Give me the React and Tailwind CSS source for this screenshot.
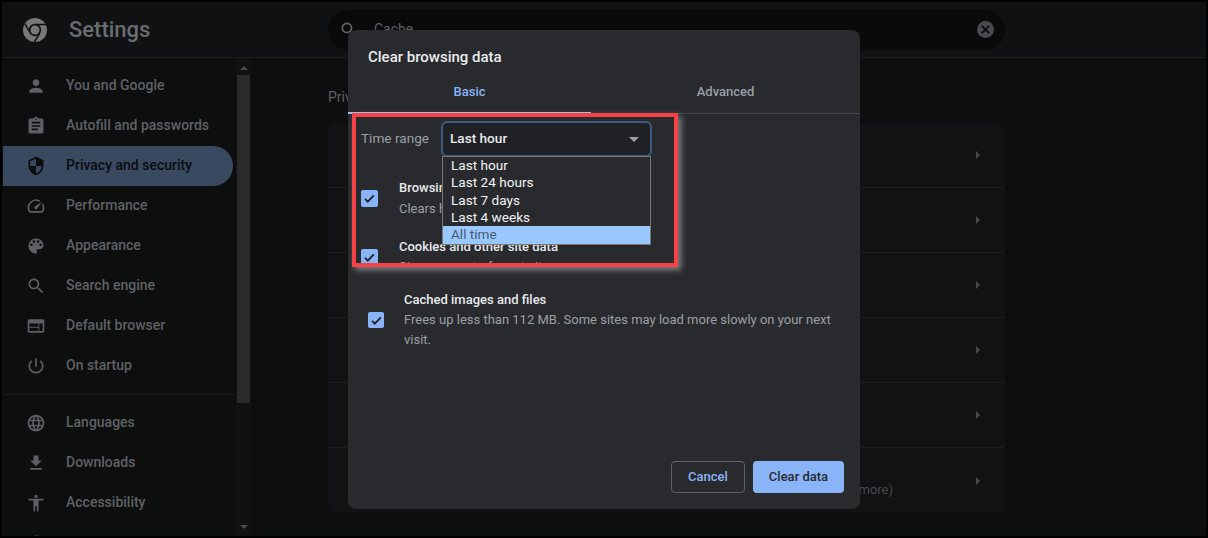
import { useState } from "react";

const FONT = "font-['Roboto','Liberation_Sans',sans-serif]";

const ICONS = {
  person:
    "M12 12c2.21 0 4-1.79 4-4s-1.79-4-4-4-4 1.79-4 4 1.79 4 4 4zm0 2c-2.67 0-8 1.34-8 4v2h16v-2c0-2.66-5.33-4-8-4z",
  assignment:
    "M19 3h-4.18C14.4 1.84 13.3 1 12 1c-1.3 0-2.4.84-2.82 2H5c-1.1 0-2 .9-2 2v14c0 1.1.9 2 2 2h14c1.1 0 2-.9 2-2V5c0-1.1-.9-2-2-2zm-7 0c.55 0 1 .45 1 1s-.45 1-1 1-1-.45-1-1 .45-1 1-1zm2 14H7v-2h7v2zm3-4H7v-2h10v2zm0-4H7V7h10v2z",
  shield:
    "M12 1L3 5v6c0 5.55 3.84 10.74 9 12 5.16-1.26 9-6.45 9-12V5l-9-4zm0 10.99h7c-.53 4.12-3.28 7.79-7 8.94V12H5V6.3l7-3.11v8.8z",
  speed:
    "M20.38 8.57l-1.23 1.85a8 8 0 0 1-.22 7.58H5.07A8 8 0 0 1 15.58 6.85l1.85-1.23A10 10 0 0 0 3.35 19a2 2 0 0 0 1.72 1h13.85a2 2 0 0 0 1.74-1 10 10 0 0 0-.27-10.44zm-9.79 6.84a2 2 0 0 0 2.83 0l5.66-8.49-8.49 5.66a2 2 0 0 0 0 2.83z",
  palette:
    "M12 3c-4.97 0-9 4.03-9 9s4.03 9 9 9c.83 0 1.5-.67 1.5-1.5 0-.39-.15-.74-.39-1.01-.23-.26-.38-.61-.38-.99 0-.83.67-1.5 1.5-1.5H16c2.76 0 5-2.24 5-5 0-4.42-4.03-8-9-8zm-5.5 9c-.83 0-1.5-.67-1.5-1.5S5.67 9 6.5 9 8 9.67 8 10.5 7.33 12 6.5 12zm3-4C8.67 8 8 7.33 8 6.5S8.67 5 9.5 5s1.5.67 1.5 1.5S10.33 8 9.5 8zm5 0c-.83 0-1.5-.67-1.5-1.5S13.67 5 14.5 5s1.5.67 1.5 1.5S15.33 8 14.5 8zm3 4c-.83 0-1.5-.67-1.5-1.5S16.67 9 17.5 9s1.5.67 1.5 1.5-.67 1.5-1.5 1.5z",
  search:
    "M15.5 14h-.79l-.28-.27C15.41 12.59 16 11.11 16 9.5 16 5.91 13.09 3 9.5 3S3 5.91 3 9.5 5.91 16 9.5 16c1.61 0 3.09-.59 4.23-1.57l.27.28v.79l5 4.99L20.49 19l-4.99-5zm-6 0C7.01 14 5 11.99 5 9.5S7.01 5 9.5 5 14 7.01 14 9.5 11.99 14 9.5 14z",
  web: "M20 4H4c-1.1 0-1.99.9-1.99 2L2 18c0 1.1.9 2 2 2h16c1.1 0 2-.9 2-2V6c0-1.1-.9-2-2-2zm-5 14H4v-4h11v4zm0-5H4V9h11v4zm5 5h-4V9h4v9z",
  power:
    "M13 3h-2v10h2V3zm4.83 2.17l-1.42 1.42C17.99 7.86 19 9.81 19 12c0 3.87-3.13 7-7 7s-7-3.13-7-7c0-2.19 1.01-4.14 2.58-5.42L6.17 5.17C4.23 6.82 3 9.26 3 12c0 4.97 4.03 9 9 9s9-4.03 9-9c0-2.74-1.23-5.18-3.17-6.83z",
  language:
    "M11.99 2C6.47 2 2 6.48 2 12s4.47 10 9.99 10C17.52 22 22 17.52 22 12S17.52 2 11.99 2zm6.93 6h-2.95c-.32-1.25-.78-2.45-1.38-3.56 1.84.63 3.37 1.91 4.33 3.56zM12 4.04c.83 1.2 1.48 2.53 1.91 3.96h-3.82c.43-1.43 1.08-2.76 1.91-3.96zM4.26 14C4.1 13.36 4 12.69 4 12s.1-1.36.26-2h3.38c-.08.66-.14 1.32-.14 2 0 .68.06 1.34.14 2H4.26zm.82 2h2.95c.32 1.25.78 2.45 1.38 3.56-1.84-.63-3.37-1.9-4.33-3.56zm2.95-8H5.08c.96-1.66 2.49-2.93 4.33-3.56C8.81 5.55 8.35 6.75 8.03 8zM12 19.96c-.83-1.2-1.48-2.53-1.91-3.96h3.82c-.43 1.43-1.08 2.76-1.91 3.96zM14.34 14H9.66c-.09-.66-.16-1.32-.16-2 0-.68.07-1.35.16-2h4.68c.09.65.16 1.32.16 2 0 .68-.07 1.34-.16 2zm.25 5.56c.6-1.11 1.06-2.31 1.38-3.56h2.95c-.96 1.65-2.49 2.93-4.33 3.56zM16.36 14c.08-.66.14-1.32.14-2 0-.68-.06-1.34-.14-2h3.38c.16.64.26 1.31.26 2s-.1 1.36-.26 2h-3.38z",
  download: "M19 9h-4V3H9v6H5l7 7 7-7zM5 18v2h14v-2H5z",
  accessibility:
    "M12 2c1.1 0 2 .9 2 2s-.9 2-2 2-2-.9-2-2 .9-2 2-2zm9 7h-6v13h-2v-6h-2v6H9V9H3V7h18v2z",
  history:
    "M13 3a9 9 0 0 0-9 9H1l3.89 3.89.07.14L9 12H6a7 7 0 1 1 2.05 4.95l-1.42 1.42A9 9 0 1 0 13 3z",
};

const NAV_TOP = [
  { icon: "person", label: "You and Google" },
  { icon: "assignment", label: "Autofill and passwords" },
  { icon: "shield", label: "Privacy and security", active: true },
  { icon: "speed", label: "Performance" },
  { icon: "palette", label: "Appearance" },
  { icon: "search", label: "Search engine" },
  { icon: "web", label: "Default browser" },
  { icon: "power", label: "On startup" },
];

const NAV_BOTTOM = [
  { icon: "language", label: "Languages" },
  { icon: "download", label: "Downloads" },
  { icon: "accessibility", label: "Accessibility" },
  { icon: "history", label: "System" },
];

const TIME_RANGES = ["Last hour", "Last 24 hours", "Last 7 days", "Last 4 weeks"];

function Icon({ name, className }) {
  return (
    <svg viewBox="0 0 24 24" className={className} fill="currentColor">
      <path d={ICONS[name]} />
    </svg>
  );
}

function NavItem({ item }) {
  return (
    <div
      className={`mr-[3px] flex h-10 shrink-0 items-center rounded-r-[20px] ${
        item.active ? "bg-[#394960] text-[#0b0c0e]" : "text-[#5c5f63]"
      }`}
    >
      <Icon name={item.icon} className="ml-[23px] h-5 w-5 shrink-0" />
      <span
        className={`-mt-[2px] ml-[20px] whitespace-nowrap text-[14px] font-medium ${
          item.active ? "text-[#0b0c0e]" : "text-[#5e6165]"
        }`}
      >
        {item.label}
      </span>
    </div>
  );
}

function Checkbox({ className }) {
  return (
    <span className={`flex items-center justify-center rounded-[2px] bg-[#8ab4f8] ${className}`}>
      <svg viewBox="0 0 16 16" className="h-[15px] w-[15px]" fill="none" stroke="#202124" strokeWidth="1.9">
        <path d="M3.2 8.4l3 3 6.4-6.8" />
      </svg>
    </span>
  );
}

function Row({ last, children }) {
  return (
    <div
      className={`relative flex h-[65px] items-center justify-end pr-[25px] ${
        last ? "" : "border-b border-[#1d1e20]"
      }`}
    >
      {children}
      <span className="h-0 w-0 border-y-[4.5px] border-l-[4px] border-y-transparent border-l-[#47494c]" />
    </div>
  );
}

function ChromeLogo() {
  return (
    <svg viewBox="0 0 24 24" className="ml-[21px] h-6 w-6 shrink-0">
      <circle cx="12" cy="12" r="12" fill="#76787a" />
      <circle cx="12" cy="12" r="6.2" fill="#101113" />
      <circle cx="12" cy="12" r="4.5" fill="#76787a" />
      <path d="M12 6.5H23M7.2 15l-5.4-9.4M16.8 15l-5.6 9.4" stroke="#101113" strokeWidth="1.5" />
    </svg>
  );
}

function App() {
  const [range] = useState("Last hour");

  return (
    <div className={`${FONT} relative flex h-[538px] w-[1208px] flex-col overflow-hidden border-2 border-black bg-[#0d0e0e]`}>
      {/* Header */}
      <header className="flex h-[56px] shrink-0 items-center border-b border-[#1d1e20] bg-[#101113]">
        <ChromeLogo />
        <span className="ml-[22px] w-[259px] text-[22px] font-medium text-[#6a6d70]">Settings</span>
        <div className="flex h-10 w-[677px] items-center rounded-full bg-[#0a0a0b] pl-[11px] pr-[11px]">
          <Icon name="search" className="h-5 w-5 text-[#5e6165]" />
          <span className="ml-[15px] flex-1 text-[14px] text-[#5e6165]">Cache</span>
          <span className="flex h-[17px] w-[17px] items-center justify-center rounded-full bg-[#47494c]">
            <svg viewBox="0 0 12 12" className="h-[11px] w-[11px]" stroke="#0c0c0d" strokeWidth="2">
              <path d="M2 2l8 8M10 2l-8 8" />
            </svg>
          </span>
        </div>
      </header>

      <div className="flex min-h-0 flex-1">
        {/* Sidebar */}
        <nav className="flex w-[234px] shrink-0 flex-col overflow-hidden pl-px pt-[8px]">
          {NAV_TOP.map((item) => (
            <NavItem key={item.label} item={item} />
          ))}
          <div className="mb-[8px] mt-[8px] h-px shrink-0 bg-[#1a1b1c]" />
          {NAV_BOTTOM.map((item) => (
            <NavItem key={item.label} item={item} />
          ))}
        </nav>

        {/* Scrollbar */}
        <div className="flex w-[15px] shrink-0 flex-col items-center bg-[#111111]">
          <span className="mt-[8px] h-0 w-0 border-x-[4px] border-b-[4px] border-x-transparent border-b-[#47494c]" />
          <div className="mt-[5px] h-[328px] w-[13px] bg-[#2a2a2a]" />
          <span className="mb-[7px] mt-auto h-0 w-0 border-x-[4px] border-t-[4px] border-x-transparent border-t-[#47494c]" />
        </div>

        {/* Main */}
        <main className="min-w-0 flex-1 pl-[77px] pt-[30px]">
          <p className="text-[14px] font-normal leading-[18px] text-[#5e6165]">Privacy and security</p>
          <div className="mt-[17px] w-[677px] rounded-lg bg-[#111214]">
            <Row />
            <Row />
            <Row />
            <Row />
            <Row />
            <Row last>
              <span className="absolute left-[511px] top-[32px] text-[13px] text-[#47494c]">(or more)</span>
            </Row>
          </div>
        </main>
      </div>

      {/* Clear browsing data dialog */}
      <div className="absolute left-[346px] top-[28px] flex h-[479px] w-[512px] flex-col rounded-lg bg-[#292a2d]">
        <h2 className="pl-5 pt-[17px] text-[15px] font-medium leading-5 text-[#e8eaed]">Clear browsing data</h2>
        <div className="mt-[15px] flex h-[32px] border-b border-[#45474a] text-[13px] font-medium">
          <div className="relative flex w-[243px] items-start justify-center leading-5 text-[#8ab4f8]">
            Basic
            <span className="absolute bottom-[-1px] left-0 right-0 h-[2px] bg-[#a8b8e8]" />
          </div>
          <div className="flex flex-1 items-start justify-center leading-5 text-[#9aa0a6]">Advanced</div>
        </div>

        {/* Cached images row, the rest sits under the highlight box */}
        <div className="mt-[176px] flex pl-5 pr-[24px]">
          <Checkbox className="mt-[22px] h-4 w-4 shrink-0" />
          <div className="ml-5 text-[13px] leading-5">
            <p className="font-medium text-[#e8eaed]">Cached images and files</p>
            <p className="text-[#9aa0a6]">
              Frees up less than 112 MB. Some sites may load more slowly on your next visit.
            </p>
          </div>
        </div>

        <div className="mt-auto flex justify-end gap-2 pb-4 pr-4 text-[13px] font-medium">
          <button className="h-8 w-[74px] rounded border border-[#5f6368] text-[#8ab4f8]">Cancel</button>
          <button className="h-8 w-[91px] rounded bg-[#8ab4f8] text-[#292a2d]">Clear data</button>
        </div>
      </div>

      {/* Red highlight box pasted over the dialog */}
      <div className="absolute left-[350px] top-[111px] h-[154px] w-[326px] overflow-hidden border-4 border-[#f44246] bg-[#292a2d]">
        <div className="flex items-center pl-[5px] pt-[4px]">
          <span className="-mt-[2px] w-[80px] text-[13.6px] text-[#9aa0a6]">Time range</span>
          <div className="flex h-[36px] w-[211px] items-center justify-between rounded-md border-2 border-[#3f5a80] bg-[#202124] pl-[7px] pr-[11px] text-[13.6px] font-medium text-[#e8eaed]">
            <span className="-mt-[2px]">{range}</span>
            <span className="h-0 w-0 border-x-[5px] border-t-[5px] border-x-transparent border-t-[#9aa0a6]" />
          </div>
        </div>

        <div className="mt-[21px] flex pl-[5px]">
          <Checkbox className="mt-[12px] h-[17px] w-[17px] shrink-0" />
          <div className="ml-[21px] text-[13px] leading-5">
            <p className="font-medium text-[#e8eaed]">Browsing history</p>
            <p className="mt-px text-[#9aa0a6]">Clears history</p>
          </div>
        </div>

        <div className="mt-[19px] flex pl-[5px]">
          <Checkbox className="mt-[11px] h-[17px] w-[17px] shrink-0" />
          <div className="ml-[21px] text-[13px] leading-5">
            <p className="-mt-[1px] font-medium text-[#e8eaed]">Cookies and other site data</p>
            <p className="text-[#9aa0a6]">Signs you out of most sites.</p>
          </div>
        </div>

        {/* Open select list */}
        <ul className="absolute left-[86px] top-[39px] w-[209px] border border-[#767676] bg-[#292a2d] text-[13.6px] text-[#f1f3f4]">
          {TIME_RANGES.map((t) => (
            <li key={t} className="h-[17.3px] pl-2 leading-[17px]">
              {t}
            </li>
          ))}
          <li className="h-[18px] bg-[#99c8ff] pl-2 leading-[17px] text-[#4c5a6e]">All time</li>
        </ul>
      </div>
      {/* soft shadow around the box */}
      <div className="pointer-events-none absolute left-[350px] top-[111px] h-[154px] w-[326px] shadow-[3px_3px_6px_rgba(200,200,200,0.55)]" />
    </div>
  );
}

export default App;
